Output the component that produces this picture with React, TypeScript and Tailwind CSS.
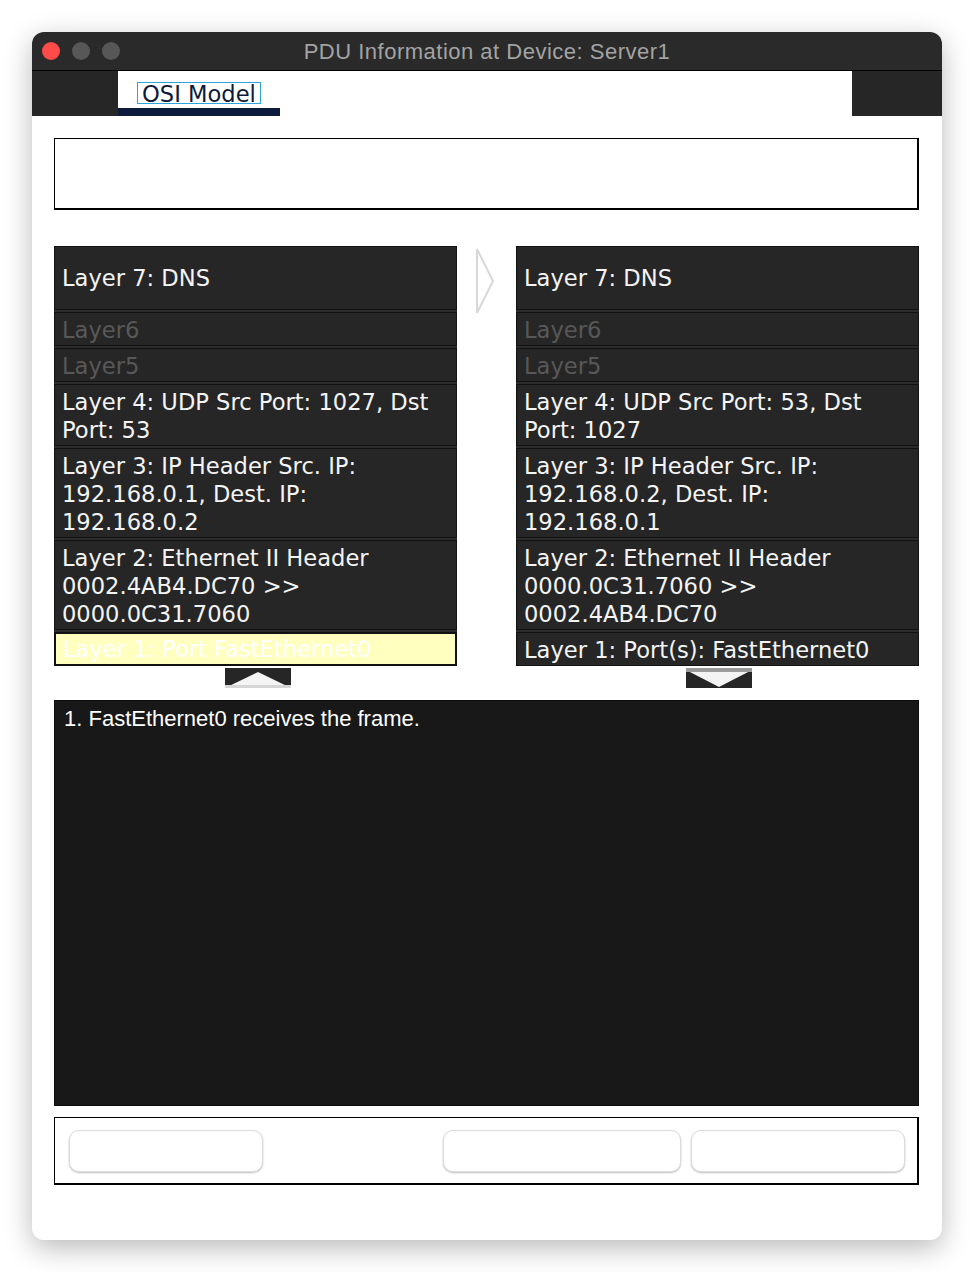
import React from "react";

type Layer = {
  lines: string[];
  h?: string;
  dim?: boolean;
  hi?: boolean;
};

const leftLayers: Layer[] = [
  { lines: ["Layer 7: DNS"], h: "h-[64px]" },
  { lines: ["Layer6"], dim: true },
  { lines: ["Layer5"], dim: true },
  { lines: ["Layer 4: UDP Src Port: 1027, Dst", "Port: 53"] },
  { lines: ["Layer 3: IP Header Src. IP:", "192.168.0.1, Dest. IP:", "192.168.0.2"] },
  { lines: ["Layer 2: Ethernet II Header", "0002.4AB4.DC70 >>", "0000.0C31.7060"] },
  { lines: ["Layer 1: Port FastEthernet0"], hi: true },
];

const rightLayers: Layer[] = [
  { lines: ["Layer 7: DNS"], h: "h-[64px]" },
  { lines: ["Layer6"], dim: true },
  { lines: ["Layer5"], dim: true },
  { lines: ["Layer 4: UDP Src Port: 53, Dst", "Port: 1027"] },
  { lines: ["Layer 3: IP Header Src. IP:", "192.168.0.2, Dest. IP:", "192.168.0.1"] },
  { lines: ["Layer 2: Ethernet II Header", "0000.0C31.7060 >>", "0002.4AB4.DC70"] },
  { lines: ["Layer 1: Port(s): FastEthernet0"] },
];

const LayerRow = ({ layer }: { layer: Layer }) => {
  let cls = "border border-[#121212] bg-[#262626] text-[#f4f4f4] pt-[3px] pb-[1px]";
  if (layer.dim) cls = "border border-[#121212] bg-[#262626] text-[#585858] pt-[3px] pb-[1px]";
  if (layer.hi) cls = "border-2 border-[#111] bg-[#ffffc0] text-white pt-[1px] pb-[1px]";
  return (
    <div
      className={`${cls} ${layer.h ? layer.h + " flex items-center !pt-0 !pb-0" : ""} px-[7px] text-[22.6px] leading-[28px] whitespace-nowrap`}
    >
      <div>
        {layer.lines.map((l, i) => (
          <div key={i}>{l}</div>
        ))}
      </div>
    </div>
  );
};

const LayerPanel = ({ layers }: { layers: Layer[] }) => (
  <div className="flex w-[403px] flex-col gap-[2px] bg-[#2c2c2c]">
    {layers.map((l, i) => (
      <LayerRow key={i} layer={l} />
    ))}
  </div>
);

const UpArrow = () => (
  <svg width="66" height="20" viewBox="0 0 66 20">
    <rect width="66" height="20" fill="#262626" />
    <polygon points="0,20 33,4 66,20" fill="#f4f4f4" />
    <rect y="17" width="66" height="3" fill="#d6d6d6" />
  </svg>
);

const DownArrow = () => (
  <svg width="66" height="20" viewBox="0 0 66 20">
    <rect width="66" height="20" fill="#262626" />
    <polygon points="0,2 66,2 33,19" fill="#f4f4f4" />
    <rect y="0" width="66" height="4" fill="#9a9a9a" />
  </svg>
);

export default function App() {
  return (
    <div className="min-h-[1272px] bg-white pt-[32px] pl-[32px]">
      <div className="flex h-[1208px] w-[910px] flex-col overflow-hidden rounded-[12px] bg-white shadow-[0_8px_28px_rgba(0,0,0,0.28)]">
        {/* title bar */}
        <div className="relative flex h-[39px] items-center border-b border-black bg-[#2a2a2a]">
          <div className="flex gap-[12px] pl-[10px]">
            <span className="h-[18px] w-[18px] rounded-full bg-[#fd4b4a]" />
            <span className="h-[18px] w-[18px] rounded-full bg-[#575757]" />
            <span className="h-[18px] w-[18px] rounded-full bg-[#575757]" />
          </div>
          <div className="absolute inset-0 flex items-center justify-center font-['Liberation_Sans',Arial,sans-serif] text-[22px] tracking-[0.5px] text-[#a3a3a3]">
            PDU Information at Device: Server1
          </div>
        </div>

        {/* tab strip */}
        <div className="flex h-[45px]">
          <div className="w-[86px] bg-[#262626]" />
          <div className="flex flex-1 bg-white">
            <div className="flex w-[162px] flex-col">
              <div className="flex-1 pl-[19px] pt-[11px]">
                <span className="inline-block h-[22px] border border-[#2aa6dd] px-[4px] font-['DejaVu_Sans',sans-serif] text-[22.6px] leading-[22px] text-[#0d1a3a]">
                  OSI Model
                </span>
              </div>
              <div className="h-[10px] bg-[#0c1a3b]" />
            </div>
          </div>
          <div className="w-[90px] bg-[#262626]" />
        </div>

        {/* content */}
        <div className="flex flex-col px-[22px] pt-[22px] font-['DejaVu_Sans',sans-serif]">
          <div className="h-[72px] w-[865px] border border-b-2 border-r-2 border-black" />

          <div className="mt-[36px] flex w-[865px]">
            <div className="flex flex-col items-center">
              <LayerPanel layers={leftLayers} />
              <div className="mt-[2px] ml-[4px]">
                <UpArrow />
              </div>
            </div>
            <div className="flex w-[59px] justify-center pt-[2px]">
              <svg width="20" height="66" viewBox="0 0 20 66" className="-ml-[4px]">
                <path d="M2 1 L2 65 M2 1 L18 33 L2 65" fill="none" stroke="#d8d8d8" strokeWidth="2" />
              </svg>
            </div>
            <div className="flex flex-col items-center">
              <LayerPanel layers={rightLayers} />
              <div className="mt-[2px] ml-[2px]">
                <DownArrow />
              </div>
            </div>
          </div>

          <div className="mt-[12px] h-[406px] w-[865px] border border-[#0c0c0c] bg-[#181818] px-[9px] pt-[4px] font-['Liberation_Sans',Arial,sans-serif] text-[22px] leading-[28px] text-white">
            1. FastEthernet0 receives the frame.
          </div>

          <div className="mt-[11px] flex h-[68px] w-[865px] items-center border border-b-2 border-r-2 border-black pl-[14px] pr-[12px]">
            <div className="h-[42px] w-[194px] rounded-[10px] border border-[#dcdcdc] bg-white shadow-[0_1px_2px_rgba(0,0,0,0.25)]" />
            <div className="ml-auto h-[42px] w-[238px] rounded-[10px] border border-[#dcdcdc] bg-white shadow-[0_1px_2px_rgba(0,0,0,0.25)]" />
            <div className="ml-[10px] h-[42px] w-[214px] rounded-[10px] border border-[#dcdcdc] bg-white shadow-[0_1px_2px_rgba(0,0,0,0.25)]" />
          </div>
        </div>
      </div>
    </div>
  );
}
